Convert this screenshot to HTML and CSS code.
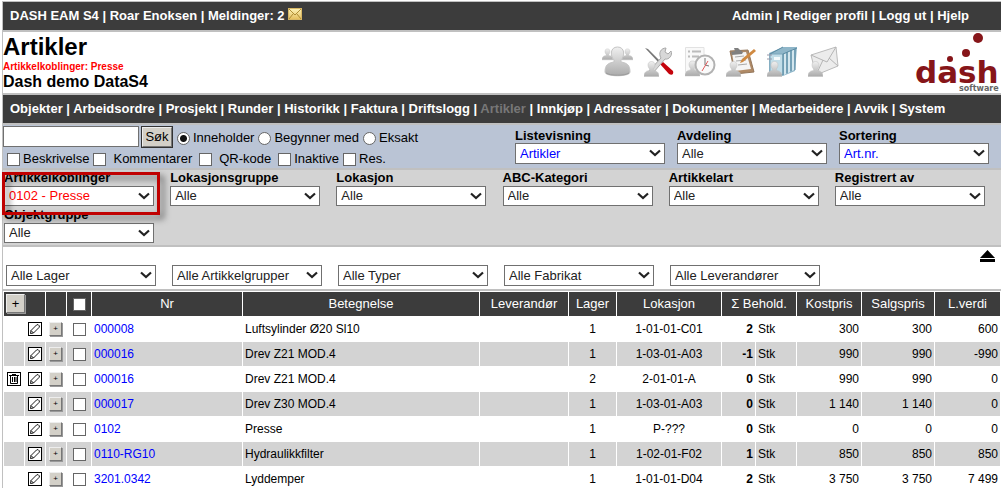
FILE: index.html
```html
<!DOCTYPE html>
<html lang="no">
<head>
<meta charset="utf-8">
<title>DASH EAM S4 - Artikler</title>
<link rel="stylesheet" href="styles.css">
</head>
<body>
<svg class="defs" aria-hidden="true">
  <defs>
    <linearGradient id="silver" x1="0" y1="0" x2="0" y2="1"><stop offset="0" stop-color="#f0f0f0"/><stop offset="1" stop-color="#ababab"/></linearGradient>
    <linearGradient id="gold" x1="0" y1="0" x2="0" y2="1"><stop offset="0" stop-color="#fdf3b8"/><stop offset="1" stop-color="#e3bd5c"/></linearGradient>
    <symbol id="chevron" viewBox="0 0 12 8"><path d="M1 1.500L6 6L11 1.500" fill="none" stroke="#222" stroke-width="2.200"/></symbol>
    <symbol id="person" viewBox="0 0 16 17"><path d="M0 17C0 12 3 11 6 10.500V9C3.500 6.500 3.500 1 8 1S12.500 6.500 10 9V10.500C13 11 16 12 16 17Z" fill="url(#silver)" stroke="#bdbdbd" stroke-width=".5"/></symbol>
    <symbol id="pencil" viewBox="0 0 14 14"><rect x=".5" y=".5" width="13" height="13" fill="#fff" stroke="#000"/><path d="M2.500 11.500L3 8.500L8.500 3L10 2.500L11.500 4L11 5.500L5.500 11ZM3 8.500L5.500 11" fill="none" stroke="#000" stroke-width=".9"/></symbol>
    <symbol id="trash" viewBox="0 0 14 14"><rect x=".5" y=".5" width="13" height="13" fill="#fff" stroke="#000"/><path d="M2 3.500H12M5 2.500H9M3.500 4V11.500H10.500V4M5.500 5V10M7.500 5V10M9 5V10" fill="none" stroke="#000"/></symbol>
  </defs>
</svg>
<div class="page">
  <header class="bar">
    <div>DASH EAM S4 | Roar Enoksen | <a href="#">Meldinger: 2</a>
      <svg class="mail" viewBox="0 0 14 12" aria-hidden="true"><rect x=".5" y=".5" width="13" height="11" fill="url(#gold)" stroke="#d8b765"/><path d="M1 1L7 7L13 1M1 11L5 6M13 11L9 6" fill="none" stroke="#a8842c" stroke-width=".9"/></svg>
    </div>
    <div class="account"><a href="#">Admin</a> | <a href="#">Rediger profil</a> | <a href="#">Logg ut</a> | <a href="#">Hjelp</a></div>
  </header>

  <section class="banner">
    <div class="titles">
      <h1>Artikler</h1>
      <p class="filter-note">Artikkelkoblinger: Presse</p>
      <h2>Dash demo DataS4</h2>
    </div>
    <div class="shortcuts">
      <a href="#" aria-label="Medarbeidere"><svg viewBox="0 0 32 32"><use href="#person" x="0" y="1" width="11" height="14"/><use href="#person" x="20" y="1" width="11" height="14"/><path d="M3 26C3 19 6 17 12 16V14C8 10 8 1 15.500 1S23 10 19 14V16C25 17 28 19 28 26C28 31 3 31 3 26Z" fill="url(#silver)" stroke="#c4c4c4"/><path d="M4 27C8 30 23 30 27 27" fill="none" stroke="#999"/></svg></a>
      <a href="#" aria-label="Arbeidsordre"><svg viewBox="0 0 32 32"><path d="M2 2L5 3L19 17L17 18Z" fill="#777"/><path d="M17 18L20 16L30 25C31 28 29 30 26 28Z" fill="#c4040c"/><path d="M5 26L18 12C15 7 18 2 23 2L22 6L25 8L28 5C30 9 26 14 22 13L10 27Z" fill="#d8d8d8" stroke="#a9a9a9"/><use href="#person" x="1" y="14" width="15" height="17"/></svg></a>
      <a href="#" aria-label="Timer"><svg viewBox="0 0 32 32"><path d="M1.500 1.500H20V26H1.500Z" fill="#f9f9f9" stroke="#e2e2e2"/><path d="M4 5.500H6M8 5.500H17M4 10.500H6M8 10.500H15" stroke="#bcbcbc" stroke-width="2"/><use href="#person" x="1" y="13" width="15" height="18"/><circle cx="21" cy="19" r="9.500" fill="#fafafa" stroke="#b2b2b2" stroke-width="2"/><path d="M21 12V19L25 20" fill="none" stroke="#777"/><path d="M24 15L18 25" stroke="#e35b5b"/></svg></a>
      <a href="#" aria-label="Oppgaver"><svg viewBox="0 0 32 32"><path d="M5 5L23 4L29 26L10 28Z" fill="#b08a66" stroke="#94775c"/><path d="M7 7L21 6L26 23L10 25Z" fill="#f5f5f5"/><path d="M10 11L19 10M11 15L21 14M13 19L22 18" stroke="#aaa"/><path d="M6 6L10 5L9 2H13L15 4L18 6L17 8L7 9Z" fill="#808080"/><path d="M15 17L17 13L29 3L31 5L18 16Z" fill="#d08a42"/><use href="#person" x="1" y="14" width="15" height="17"/></svg></a>
      <a href="#" aria-label="Dokumenter"><svg viewBox="0 0 32 32"><path d="M3 7L17 1H31L29 25L17 30L3 26Z" fill="#8fb6c9"/><path d="M4 8H17V29L4 26Z" fill="#c2dde8" stroke="#7aa6bb"/><path d="M18 8L20 7V28L18 29ZM22 6L24 5V26L22 27ZM26 4L28 3V24L26 25Z" fill="#d3e6ee"/><path d="M17 8L31 2M17 8V29M21 6V27M25 4V25M29 3V24M4 8L17 1" fill="none" stroke="#5b8ba3"/><path d="M8 11H14V14H8Z" fill="#f5fafc"/><path d="M1 9H6M1 13H6" stroke="#99a"/><use href="#person" x="1" y="14" width="15" height="17"/></svg></a>
      <a href="#" aria-label="Meldinger"><svg viewBox="0 0 32 32"><path d="M4 9L29 1L31 20L9 29Z" fill="#ececec" stroke="#bbb"/><path d="M4 9L20 16L29 1M9 29L16 14M31 20L22 12" fill="none" stroke="#b5b5b5"/><use href="#person" x="1" y="14" width="15" height="17"/></svg></a>
    </div>
    <svg class="logo" viewBox="0 0 86 61" role="img" aria-label="dash software">
      <circle cx="63" cy="6" r="5" fill="#861519"/><circle cx="51" cy="21" r="4" fill="#861519"/><circle cx="35" cy="27" r="3" fill="#861519"/>
      <text class="logo-name" x="0" y="51">dash</text>
      <text class="logo-sub" x="44" y="59">software</text>
    </svg>
  </section>

  <nav class="bar">
    <div><a href="#">Objekter</a> | <a href="#">Arbeidsordre</a> | <a href="#">Prosjekt</a> | <a href="#">Runder</a> | <a href="#">Historikk</a> | <a href="#">Faktura</a> | <a href="#">Driftslogg</a> | <a href="#" class="current">Artikler</a> | <a href="#">Innkjøp</a> | <a href="#">Adressater</a> | <a href="#">Dokumenter</a> | <a href="#">Medarbeidere</a> | <a href="#">Avvik</a> | <a href="#">System</a></div>
  </nav>

  <form class="search">
    <div class="criteria">
      <div class="line">
        <input type="text" class="query" aria-label="Søketekst">
        <button type="button" class="raised find">Søk</button>
        <div class="modes">
          <label><input type="radio" name="mode" checked>Inneholder</label>
          <label><input type="radio" name="mode">Begynner med</label>
          <label><input type="radio" name="mode">Eksakt</label>
        </div>
      </div>
      <div class="line scopes">
        <label><input type="checkbox">Beskrivelse</label>
        <label class="wide"><input type="checkbox">Kommentarer</label>
        <label class="wide"><input type="checkbox">QR-kode</label>
        <label><input type="checkbox">Inaktive</label>
        <label><input type="checkbox">Res.</label>
      </div>
    </div>
    <div class="views">
      <div class="field"><label for="view">Listevisning</label><span class="pick"><select id="view" class="chosen"><option>Artikler</option></select><svg><use href="#chevron"/></svg></span></div>
      <div class="field"><label for="dept">Avdeling</label><span class="pick"><select id="dept"><option>Alle</option></select><svg><use href="#chevron"/></svg></span></div>
      <div class="field"><label for="sort">Sortering</label><span class="pick"><select id="sort" class="chosen"><option>Art.nr.</option></select><svg><use href="#chevron"/></svg></span></div>
    </div>
  </form>

  <section class="filters">
    <div class="field"><label for="f1">Artikkelkoblinger</label><span class="pick"><select id="f1" class="active"><option>0102 - Presse</option></select><svg><use href="#chevron"/></svg></span></div>
    <div class="field"><label for="f2">Lokasjonsgruppe</label><span class="pick"><select id="f2"><option>Alle</option></select><svg><use href="#chevron"/></svg></span></div>
    <div class="field"><label for="f3">Lokasjon</label><span class="pick"><select id="f3"><option>Alle</option></select><svg><use href="#chevron"/></svg></span></div>
    <div class="field"><label for="f4">ABC-Kategori</label><span class="pick"><select id="f4"><option>Alle</option></select><svg><use href="#chevron"/></svg></span></div>
    <div class="field"><label for="f5">Artikkelart</label><span class="pick"><select id="f5"><option>Alle</option></select><svg><use href="#chevron"/></svg></span></div>
    <div class="field"><label for="f6">Registrert av</label><span class="pick"><select id="f6"><option>Alle</option></select><svg><use href="#chevron"/></svg></span></div>
    <div class="field"><label for="f7">Objektgruppe</label><span class="pick"><select id="f7"><option>Alle</option></select><svg><use href="#chevron"/></svg></span></div>
    <div class="marker"></div>
  </section>

  <section class="quick">
    <span class="pick"><select aria-label="Lager"><option>Alle Lager</option></select><svg><use href="#chevron"/></svg></span>
    <span class="pick"><select aria-label="Artikkelgruppe"><option>Alle Artikkelgrupper</option></select><svg><use href="#chevron"/></svg></span>
    <span class="pick"><select aria-label="Type"><option>Alle Typer</option></select><svg><use href="#chevron"/></svg></span>
    <span class="pick"><select aria-label="Fabrikat"><option>Alle Fabrikat</option></select><svg><use href="#chevron"/></svg></span>
    <span class="pick"><select aria-label="Leverandør"><option>Alle Leverandører</option></select><svg><use href="#chevron"/></svg></span>
    <button type="button" class="collapse" aria-label="Skjul filter"><svg viewBox="0 0 15 12"><path d="M0 8L7.500 0L15 8ZM0 9H15V12H0Z"/></svg></button>
  </section>

  <table class="articles">
    <colgroup><col class="c-icon"><col class="c-icon"><col class="c-icon"><col class="c-check"><col class="c-nr"><col><col class="c-supplier"><col class="c-store"><col class="c-place"><col class="c-qty"><col class="c-unit"><col class="c-cost"><col class="c-sale"><col class="c-value"></colgroup>
    <thead>
      <tr><th colspan="2" class="add"><button type="button" class="raised new" aria-label="Ny artikkel">+</button></th><th></th><th><input type="checkbox" aria-label="Velg alle"></th><th>Nr</th><th>Betegnelse</th><th>Leverandør</th><th>Lager</th><th>Lokasjon</th><th colspan="2">Σ Behold.</th><th>Kostpris</th><th>Salgspris</th><th>L.verdi</th></tr>
    </thead>
    <tbody>
      <tr><td></td><td class="tool"><a href="#" aria-label="Rediger"><svg><use href="#pencil"/></svg></a></td><td class="tool"><button type="button" class="raised plus">+</button></td><td class="tool"><input type="checkbox" aria-label="Velg 000008"></td><td><a href="#">000008</a></td><td>Luftsylinder Ø20 Sl10</td><td></td><td class="mid">1</td><td class="mid">1-01-01-C01</td><td class="qty">2</td><td>Stk</td><td class="num">300</td><td class="num">300</td><td class="num">600</td></tr>
      <tr><td></td><td class="tool"><a href="#" aria-label="Rediger"><svg><use href="#pencil"/></svg></a></td><td class="tool"><button type="button" class="raised plus">+</button></td><td class="tool"><input type="checkbox" aria-label="Velg 000016, lager 1"></td><td><a href="#">000016</a></td><td>Drev Z21 MOD.4</td><td></td><td class="mid">1</td><td class="mid">1-03-01-A03</td><td class="qty">-1</td><td>Stk</td><td class="num">990</td><td class="num">990</td><td class="num">-990</td></tr>
      <tr><td class="tool"><a href="#" aria-label="Slett"><svg><use href="#trash"/></svg></a></td><td class="tool"><a href="#" aria-label="Rediger"><svg><use href="#pencil"/></svg></a></td><td class="tool"><button type="button" class="raised plus">+</button></td><td class="tool"><input type="checkbox" aria-label="Velg 000016, lager 2"></td><td><a href="#">000016</a></td><td>Drev Z21 MOD.4</td><td></td><td class="mid">2</td><td class="mid">2-01-01-A</td><td class="qty">0</td><td>Stk</td><td class="num">990</td><td class="num">990</td><td class="num">0</td></tr>
      <tr><td></td><td class="tool"><a href="#" aria-label="Rediger"><svg><use href="#pencil"/></svg></a></td><td class="tool"><button type="button" class="raised plus">+</button></td><td class="tool"><input type="checkbox" aria-label="Velg 000017"></td><td><a href="#">000017</a></td><td>Drev Z30 MOD.4</td><td></td><td class="mid">1</td><td class="mid">1-03-01-A03</td><td class="qty">0</td><td>Stk</td><td class="num">1 140</td><td class="num">1 140</td><td class="num">0</td></tr>
      <tr><td></td><td class="tool"><a href="#" aria-label="Rediger"><svg><use href="#pencil"/></svg></a></td><td class="tool"><button type="button" class="raised plus">+</button></td><td class="tool"><input type="checkbox" aria-label="Velg 0102"></td><td><a href="#">0102</a></td><td>Presse</td><td></td><td class="mid">1</td><td class="mid">P-???</td><td class="qty">0</td><td>Stk</td><td class="num">0</td><td class="num">0</td><td class="num">0</td></tr>
      <tr><td></td><td class="tool"><a href="#" aria-label="Rediger"><svg><use href="#pencil"/></svg></a></td><td class="tool"><button type="button" class="raised plus">+</button></td><td class="tool"><input type="checkbox" aria-label="Velg 0110-RG10"></td><td><a href="#">0110-RG10</a></td><td>Hydraulikkfilter</td><td></td><td class="mid">1</td><td class="mid">1-02-01-F02</td><td class="qty">1</td><td>Stk</td><td class="num">850</td><td class="num">850</td><td class="num">850</td></tr>
      <tr><td></td><td class="tool"><a href="#" aria-label="Rediger"><svg><use href="#pencil"/></svg></a></td><td class="tool"><button type="button" class="raised plus">+</button></td><td class="tool"><input type="checkbox" aria-label="Velg 3201.0342"></td><td><a href="#">3201.0342</a></td><td>Lyddemper</td><td></td><td class="mid">1</td><td class="mid">1-01-01-D04</td><td class="qty">2</td><td>Stk</td><td class="num">3 750</td><td class="num">3 750</td><td class="num">7 499</td></tr>
    </tbody>
  </table>
</div>
</body>
</html>
```
FILE: styles.css
```css
* { box-sizing: border-box; }

html { overflow: hidden; }

body {
  margin: 0;
  padding: 1px 0 0 2px;
  background: #fff;
  color: #000;
  font: 13px/16px "Liberation Sans", Arial, sans-serif;
}

.defs { position: absolute; width: 0; height: 0; }

.page {
  border: solid #c0c0c0;
  border-width: 1px 0 0 1px;
}

a { color: inherit; text-decoration: none; }
h1, h2, p { margin: 0; }
svg { display: block; }

/* Dark bars */
.bar {
  display: flex;
  justify-content: space-between;
  align-items: center;
  height: 30px;
  padding: 0 32px 0 7px;
  border-bottom: 2px solid #c0c0c0;
  background: #3c3c3c;
  color: #fff;
  font-weight: bold;
  white-space: nowrap;
}
.bar .current { color: #777; }
.mail { display: inline-block; width: 14px; height: 12px; vertical-align: 0; }

/* Title banner */
.banner {
  display: flex;
  align-items: flex-start;
  height: 63px;
  border-bottom: 2px solid #c0c0c0;
}
.titles { flex: 1; padding-top: 1px; }
h1 { font-size: 24px; line-height: 28px; }
.filter-note { color: #f00; font-size: 10px; font-weight: bold; line-height: 12px; }
h2 { font-size: 16px; line-height: 18px; }
.shortcuts { display: flex; gap: 9px; padding: 14px 76px 0 0; }
.shortcuts svg { width: 32px; height: 32px; }
.logo { width: 86px; height: 61px; }
.logo-name { fill: #861519; font: bold 31px "DejaVu Sans", sans-serif; }
.logo-sub { fill: #666; font: bold 8px "DejaVu Sans", sans-serif; }

/* Form controls */
input[type="checkbox"], input[type="radio"] {
  appearance: none;
  flex: none;
  width: 13px;
  height: 13px;
  margin: 0;
  border: 1px solid #666;
  background: #fff;
}
input[type="radio"] { border-radius: 50%; }
input[type="radio"]:checked { background: radial-gradient(circle, #111 3px, #fff 4px); }

.pick { position: relative; display: block; width: 150px; }
.pick select {
  appearance: none;
  display: block;
  width: 100%;
  height: 21px;
  margin: 0;
  padding: 0 20px 0 4px;
  border: 1px solid #707070;
  border-radius: 0;
  background: #fff;
  color: #222;
  font: inherit;
}
.pick svg {
  position: absolute;
  top: 6px;
  right: 4px;
  width: 12px;
  height: 8px;
  pointer-events: none;
}
.pick .chosen { color: #00f; }
.pick .active { color: #f00; }
.field label { display: block; font-weight: bold; }

.raised {
  padding: 0;
  border: 1px solid;
  border-color: #eee #777 #777 #eee;
  background: #d3d0c8;
  box-shadow: 1px 1px 0 #999;
  color: #000;
  font: 13px/16px "Liberation Sans", Arial, sans-serif;
}

/* Search */
.search {
  display: flex;
  justify-content: space-between;
  height: 45px;
  padding-right: 12px;
  border-bottom: 2px solid #c0c0c0;
  background: #bac4d5;
}
.criteria { padding-top: 1px; white-space: nowrap; }
.line { display: flex; align-items: center; height: 21px; }
.line label { display: flex; align-items: center; gap: 3px; }
.query { width: 136px; height: 21px; margin: 0; border: 1px solid #707070; background: #fff; }
.find { width: 30px; height: 20px; margin-left: 3px; outline: 1px solid #333; line-height: 14px; }
.modes { display: flex; gap: 4px; padding: 3px 0 0 5px; }
.scopes { gap: 4px; height: 24px; padding-left: 4px; }
.scopes .wide { gap: 7px; margin-right: 3px; }
.views { display: flex; gap: 12px; padding-top: 2px; }
.views label { padding-top: 1px; line-height: 15px; }

/* Filters */
.filters {
  position: relative;
  display: grid;
  grid-template-columns: repeat(6, 1fr);
  row-gap: 1px;
  padding: 0 0 2px 1px;
  border-bottom: 2px solid #c0c0c0;
  background: #d3d3d3;
}
.filters select { height: 20px; }
.marker {
  position: absolute;
  top: 2px;
  left: -1px;
  width: 158px;
  height: 43px;
  border: 3px solid #c00000;
  filter: drop-shadow(4px 4px 3px #0008);
  pointer-events: none;
}

.quick {
  position: relative;
  display: flex;
  gap: 16px;
  padding: 18px 0 3px 3px;
  border-bottom: 2px solid #c0c0c0;
}
.collapse {
  position: absolute;
  top: 3px;
  right: 6px;
  padding: 0;
  border: 0;
  background: none;
}
.collapse svg { width: 15px; height: 12px; }

/* Article list */
.articles {
  width: 100%;
  table-layout: fixed;
  border-spacing: 1px;
  font-size: 12px;
}
.c-icon { width: 20px; }
.c-check { width: 24px; }
.c-nr { width: 150px; }
.c-supplier { width: 88px; }
.c-store { width: 47px; }
.c-place { width: 104px; }
.c-qty { width: 33px; }
.c-unit { width: 40px; }
.c-cost { width: 64px; }
.c-sale { width: 72px; }
.c-value { width: 65px; }
.articles th {
  height: 24px;
  padding: 0;
  background: #3c3c3c;
  color: #fff;
  font-size: 13px;
  font-weight: normal;
}
.articles th input { display: block; margin: 0 auto; }
.articles .add { text-align: left; vertical-align: top; padding: 2px; }
.articles td { height: 24px; padding: 0 2px; white-space: nowrap; }
.articles tbody tr:nth-child(even) td { background: #d3d3d3; }
.articles td a { color: #00f; }
.articles .tool { padding: 0 3px; }
.tool svg { width: 14px; height: 14px; }
.tool input { display: block; margin: 0 auto; }
.articles .mid { text-align: center; }
.articles .num { text-align: right; }
.articles .qty { text-align: right; font-weight: bold; }
.new { display: block; width: 19px; height: 19px; }
.plus { display: block; width: 13px; height: 14px; font-size: 8px; line-height: 10px; }
```
